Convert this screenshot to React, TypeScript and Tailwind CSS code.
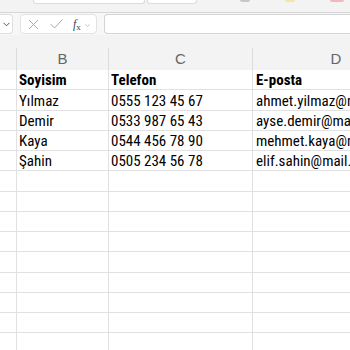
const rows = [
    { b: "Soyisim", c: "Telefon", d: "E-posta", head: true },
    { b: "Yılmaz", c: "0555 123 45 67", d: "ahmet.yilmaz@mail.com" },
    { b: "Demir", c: "0533 987 65 43", d: "ayse.demir@mail.com" },
    { b: "Kaya", c: "0544 456 78 90", d: "mehmet.kaya@mail.com" },
    { b: "Şahin", c: "0505 234 56 78", d: "elif.sahin@mail.com" },
]

const emptyRows = Array.from({ length: 9 })

const cellFont = "font-['Liberation_Sans_Narrow','Arial_Narrow','Roboto_Condensed',Roboto,sans-serif] [font-stretch:condensed]"

const App = () => {
    return (
        <div className="w-[350px] h-[350px] overflow-hidden bg-white">
            {/* ribbon remnant */}
            <div className="h-[13px] bg-[#f3f3f3] border-b border-[#d6d6d6] flex items-start">
                <div className="ml-[33px] w-[112px] h-[4px] bg-white border border-t-0 border-[#dcdcdc] rounded-b-[3px]" />
                <div className="ml-[2px] w-[50px] h-[4px] bg-white border border-t-0 border-[#dcdcdc] rounded-b-[3px]" />
                <div className="ml-[43px] w-[10px] h-[2px] bg-[#c8c8c8] rounded-b" />
                <div className="ml-[35px] w-[10px] h-[2px] bg-[#f3e6a6] rounded-b" />
                <div className="ml-[35px] w-[14px] h-[2px] bg-[#f1b9bd] rounded-b" />
            </div>

            {/* formula bar */}
            <div className="h-[22px] bg-[#f7f7f7] flex items-center">
                <div className="w-[13px] h-[20px] bg-white border border-l-0 border-[#dedede] rounded-r-[4px] flex items-center justify-end pr-[2px]">
                    <svg width="7" height="5" viewBox="0 0 7 5" fill="none" stroke="#555" strokeWidth="1">
                        <path d="M0.5 0.8 L3.5 3.8 L6.5 0.8" />
                    </svg>
                </div>
                <div className="ml-[7px] w-[77px] h-[20px] bg-white border border-[#e2e2e2] rounded-[4px] flex items-center">
                    <svg className="ml-[7px]" width="11" height="11" viewBox="0 0 11 11" fill="none" stroke="#a8a8a8" strokeWidth="1">
                        <path d="M1 1 L10 10 M10 1 L1 10" />
                    </svg>
                    <svg className="ml-[11px]" width="13" height="10" viewBox="0 0 13 10" fill="none" stroke="#a8a8a8" strokeWidth="1">
                        <path d="M0.5 5 L4.5 9 L12.5 0.5" />
                    </svg>
                    <span className="ml-[10px] font-['Liberation_Serif',serif] italic text-[12px] leading-none text-[#444]">
                        f<span className="text-[9px] not-italic relative top-[2px]">x</span>
                    </span>
                    <svg className="ml-[4px] mt-[2px]" width="5" height="3" viewBox="0 0 5 3" fill="none" stroke="#b8b8b8" strokeWidth="0.8">
                        <path d="M0.3 0.3 L2.5 2.5 L4.7 0.3" />
                    </svg>
                </div>
                <div className="ml-[7px] flex-1 h-[20px] bg-white border border-r-0 border-[#d4d4d4] rounded-l-[4px]" />
            </div>

            {/* column headers */}
            <div className="h-[35px] bg-[#f3f3f3] flex items-end">
                <div className="flex h-[22px] font-['Liberation_Sans',Arial,sans-serif] text-[15px] text-[#666]">
                    <div className="w-[17px] border-r border-[#dcdcdc]" />
                    <div className="w-[92px] border-r border-[#dcdcdc] flex items-center justify-center">B</div>
                    <div className="w-[144px] border-r border-[#dcdcdc] flex items-center justify-center">C</div>
                    <div className="w-[166px] flex items-center justify-center">D</div>
                </div>
            </div>

            {/* grid */}
            <div className={`${cellFont} text-[15px] text-black`}>
                {rows.map((r, i) => (
                    <div key={i} className="flex h-[20.25px] border-b border-[#e1e1e1]">
                        <div className="w-[17px] shrink-0 border-r border-[#e1e1e1]" />
                        <div className={`w-[92px] shrink-0 border-r border-[#e1e1e1] pl-[2px] flex items-end pb-[1px] leading-none whitespace-nowrap ${r.head ? "font-bold" : ""}`}>{r.b}</div>
                        <div className={`w-[144px] shrink-0 border-r border-[#e1e1e1] pl-[2px] flex items-end pb-[1px] leading-none whitespace-nowrap ${r.head ? "font-bold" : ""}`}>{r.c}</div>
                        <div className={`w-[170px] shrink-0 pl-[3px] flex items-end pb-[1px] leading-none whitespace-nowrap overflow-hidden ${r.head ? "font-bold" : ""}`}>{r.d}</div>
                    </div>
                ))}
                {emptyRows.map((_, i) => (
                    <div key={i} className="flex h-[20.25px] border-b border-[#e1e1e1]">
                        <div className="w-[17px] shrink-0 border-r border-[#e1e1e1]" />
                        <div className="w-[92px] shrink-0 border-r border-[#e1e1e1]" />
                        <div className="w-[144px] shrink-0 border-r border-[#e1e1e1]" />
                        <div className="w-[170px] shrink-0" />
                    </div>
                ))}
            </div>
        </div>
    )
}

export default App
